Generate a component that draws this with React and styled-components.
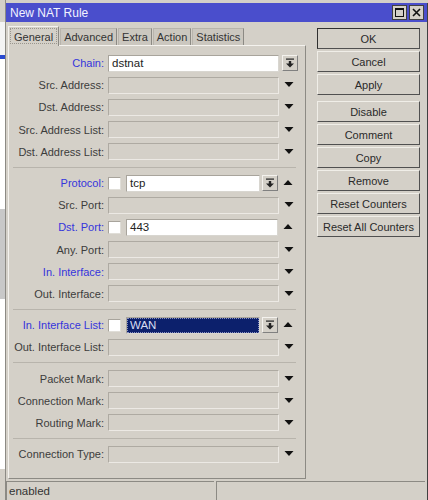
import React from 'react'
import styled, { createGlobalStyle } from 'styled-components'

const GlobalStyle = createGlobalStyle`
  html, body {
    margin: 0;
    padding: 0;
    background: #d4d0c8;
    font-family: "Liberation Sans", Arial, sans-serif;
    font-size: 11px;
    color: #333;
  }
`

const Page = styled.div`
  display: flex;
  width: 428px;
  height: 500px;
  overflow: hidden;
  background: #d4d0c8;
`

const BackStrip = styled.div`
  width: 5px;
  display: flex;
  flex-direction: column;
  background: #e8e6e0;
  border-right: 1px solid #8c8a84;
`

const StripPiece = styled.div`
  height: ${p => p.h}px;
  background: ${p => p.bg};
`

const Window = styled.div`
  flex: 1;
  display: flex;
  flex-direction: column;
  margin-top: 3px;
  border-right: 1px solid #404040;
  background: #d4d0c8;
`

const TitleBar = styled.div`
  height: 19px;
  display: flex;
  align-items: center;
  background: #4a4ecc;
  padding: 0 3px;
`

const Title = styled.div`
  flex: 1;
  color: #f2f2ff;
  font-size: 12px;
  padding-left: 1px;
`

const TitleButton = styled.div`
  width: 13px;
  height: 13px;
  margin-left: 2px;
  background: #d4d0c8;
  border: 1px solid #404040;
  display: flex;
  align-items: center;
  justify-content: center;
`

const Body = styled.div`
  flex: 1;
  display: flex;
  padding: 3px 0 0 2px;
`

const LeftCol = styled.div`
  width: 298px;
  display: flex;
  flex-direction: column;
`

const Tabs = styled.div`
  display: flex;
  height: 20px;
  align-items: flex-end;
`

const Tab = styled.div`
  height: ${p => (p.active ? 20 : 17)}px;
  padding: 0 ${p => (p.active ? 5 : 3)}px;
  display: flex;
  align-items: center;
  box-sizing: border-box;
  background: ${p => (p.active ? '#d4d0c8' : '#cbc7bf')};
  border: 1px solid ${p => (p.active ? '#f4f2ee' : '#b8b4ac')};
  border-bottom: none;
  border-right-color: #8c8a84;
  color: #333;
  font-size: 11px;
  margin-right: 1px;
  position: relative;
  z-index: ${p => (p.active ? 2 : 1)};
  margin-bottom: ${p => (p.active ? -1 : 0)}px;
  outline: ${p => (p.active ? '1px dotted #9a968e' : 'none')};
  outline-offset: -3px;
`

const Panel = styled.div`
  height: 434px;
  box-sizing: border-box;
  border: 1px solid #f4f2ee;
  border-right-color: #8c8a84;
  border-bottom-color: #8c8a84;
  padding: 6px 0 0 0;
  display: flex;
  flex-direction: column;
`

const Row = styled.div`
  height: 22.2px;
  display: flex;
  align-items: center;
  flex-shrink: 0;
`

const Label = styled.div`
  width: 95px;
  text-align: right;
  margin-right: 4px;
  white-space: nowrap;
  color: ${p => (p.blue ? '#3535dc' : '#3c3c3c')};
`

const Combo = styled.div`
  width: ${p => p.w}px;
  height: 17px;
  box-sizing: border-box;
  background: ${p => (p.selected ? '#0c206c' : p.filled ? '#fff' : '#d4d0c8')};
  border: 1px solid ${p => (p.filled ? '#a8a49c' : '#aeaaa2')};
  border-right-color: ${p => (p.filled ? '#d8d6d0' : '#ece9e4')};
  border-bottom-color: ${p => (p.filled ? '#d8d6d0' : '#ece9e4')};
  outline: ${p => (p.selected ? '1px dotted #8890c0' : 'none')};
  outline-offset: -2px;
  color: ${p => (p.selected ? '#d8dcf0' : '#222')};
  padding-left: 3px;
  display: flex;
  align-items: center;
  font-size: 11.5px;
`

const DropButton = styled.div`
  width: 16px;
  height: 16px;
  box-sizing: border-box;
  margin-left: ${p => p.gap}px;
  border: 1px solid #f4f2ee;
  border-right-color: #808080;
  border-bottom-color: #808080;
  display: flex;
  align-items: center;
  justify-content: center;
`

const Check = styled.div`
  width: 13px;
  height: 13px;
  box-sizing: border-box;
  background: #fff;
  border: 1px solid #a8a49c;
  border-right-color: #e0ded8;
  border-bottom-color: #e0ded8;
  margin-right: 5px;
`

const ArrowCell = styled.div`
  width: 20px;
  display: flex;
  justify-content: center;
  align-items: center;
`

const Separator = styled.div`
  margin: 4px 9px 4px 4px;
  border-top: 1px solid #b8b4ac;
  flex-shrink: 0;
`

const RightCol = styled.div`
  margin-left: 11px;
  margin-top: 3px;
  width: 103px;
  display: flex;
  flex-direction: column;
`

const Button = styled.div`
  height: 21px;
  box-sizing: border-box;
  margin-bottom: 2px;
  margin-top: ${p => (p.gapTop ? 4 : 0)}px;
  border: 1px solid ${p => (p.def ? '#303030' : '#f0eee8')};
  border-right-color: #505050;
  border-bottom-color: #505050;
  display: flex;
  align-items: center;
  justify-content: center;
  color: #2a2a2a;
  font-size: 11px;
`

const StatusBar = styled.div`
  height: 19px;
  display: flex;
  margin-top: 2px;
`

const StatusCell = styled.div`
  width: ${p => (p.w ? p.w + 'px' : 'auto')};
  flex: ${p => (p.w ? 'none' : 1)};
  box-sizing: border-box;
  border-top: 1px solid #8c8a84;
  border-left: 1px solid #8c8a84;
  margin-right: 2px;
  padding-left: 2px;
  display: flex;
  align-items: center;
  color: #333;
  font-size: 11.5px;
`

function DownTri() {
  return (
    <svg width="10" height="6" viewBox="0 0 10 6">
      <polygon points="0.5,0 9.5,0 5,5" fill="#111" />
    </svg>
  )
}

function UpTri() {
  return (
    <svg width="10" height="6" viewBox="0 0 10 6">
      <polygon points="0.5,5 9.5,5 5,0" fill="#111" />
    </svg>
  )
}

function ExpandIcon() {
  return (
    <svg width="10" height="10" viewBox="0 0 10 10">
      <rect x="1" y="0.5" width="8" height="1.2" fill="#222" />
      <rect x="3.8" y="3" width="2.4" height="3" fill="#222" />
      <polygon points="1,5.5 9,5.5 5,9.5" fill="#222" />
    </svg>
  )
}

function Plain({ label, blue }) {
  return (
    <Row>
      <Label blue={blue}>{label}</Label>
      <Combo w={171} />
      <ArrowCell><DownTri /></ArrowCell>
    </Row>
  )
}

function App() {
  return (
    <Page>
      <GlobalStyle />
      <BackStrip>
        <StripPiece h={22} bg="#d4d0c8" />
        <StripPiece h={33} bg="#f4f4f4" />
        <StripPiece h={4} bg="#2a4ad0" />
        <StripPiece h={150} bg="#ffffff" />
        <StripPiece h={90} bg="#c8c8c8" />
        <StripPiece h={170} bg="#ffffff" />
        <StripPiece h={31} bg="#d4d0c8" />
      </BackStrip>
      <Window>
        <TitleBar>
          <Title>New NAT Rule</Title>
          <TitleButton>
            <svg width="9" height="9" viewBox="0 0 9 9">
              <rect x="0.5" y="0.5" width="8" height="8" fill="none" stroke="#111" />
              <rect x="0" y="0" width="9" height="2" fill="#111" />
            </svg>
          </TitleButton>
          <TitleButton>
            <svg width="9" height="9" viewBox="0 0 9 9">
              <path d="M1 1 L8 8 M8 1 L1 8" stroke="#111" strokeWidth="1.6" />
            </svg>
          </TitleButton>
        </TitleBar>
        <Body>
          <LeftCol>
            <Tabs>
              <Tab active>General</Tab>
              <Tab>Advanced</Tab>
              <Tab>Extra</Tab>
              <Tab>Action</Tab>
              <Tab>Statistics</Tab>
            </Tabs>
            <Panel>
              <Row>
                <Label blue>Chain:</Label>
                <Combo w={171} filled>dstnat</Combo>
                <DropButton gap={3}><ExpandIcon /></DropButton>
              </Row>
              <Plain label="Src. Address:" />
              <Plain label="Dst. Address:" />
              <Plain label="Src. Address List:" />
              <Plain label="Dst. Address List:" />
              <Separator />
              <Row>
                <Label blue>Protocol:</Label>
                <Check />
                <Combo w={134} filled>tcp</Combo>
                <DropButton gap={2}><ExpandIcon /></DropButton>
                <ArrowCell><UpTri /></ArrowCell>
              </Row>
              <Plain label="Src. Port:" />
              <Row>
                <Label blue>Dst. Port:</Label>
                <Check />
                <Combo w={152} filled>443</Combo>
                <ArrowCell><UpTri /></ArrowCell>
              </Row>
              <Plain label="Any. Port:" />
              <Plain label="In. Interface:" blue />
              <Plain label="Out. Interface:" />
              <Separator />
              <Row>
                <Label blue>In. Interface List:</Label>
                <Check />
                <Combo w={134} filled selected>WAN</Combo>
                <DropButton gap={2}><ExpandIcon /></DropButton>
                <ArrowCell><UpTri /></ArrowCell>
              </Row>
              <Plain label="Out. Interface List:" />
              <Separator />
              <Plain label="Packet Mark:" />
              <Plain label="Connection Mark:" />
              <Plain label="Routing Mark:" />
              <Separator />
              <Plain label="Connection Type:" />
            </Panel>
          </LeftCol>
          <RightCol>
            <Button def>OK</Button>
            <Button>Cancel</Button>
            <Button>Apply</Button>
            <Button gapTop>Disable</Button>
            <Button>Comment</Button>
            <Button>Copy</Button>
            <Button>Remove</Button>
            <Button>Reset Counters</Button>
            <Button>Reset All Counters</Button>
          </RightCol>
        </Body>
        <StatusBar>
          <StatusCell w={208}>enabled</StatusCell>
          <StatusCell />
        </StatusBar>
      </Window>
    </Page>
  )
}

export default App
